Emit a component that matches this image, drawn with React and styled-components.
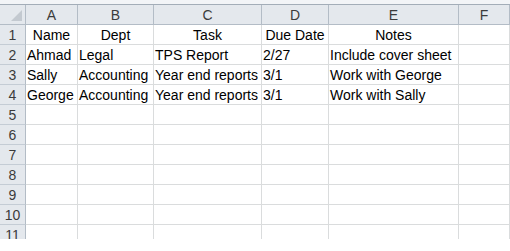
import React from "react";
import styled, { createGlobalStyle } from "styled-components";

const GlobalStyle = createGlobalStyle`
  html, body {
    margin: 0;
    padding: 0;
    background: #ffffff;
    overflow: hidden;
  }
`;

const COLS = "26px 52px 76px 108px 67px 130px 1fr";

const Sheet = styled.div`
  width: 510px;
  height: 239px;
  overflow: hidden;
  font-family: "Liberation Sans", Arial, sans-serif;
  font-size: 14px;
  color: #000;
`;

const TopStrip = styled.div`
  height: 4px;
  background: #f2f4f7;
  border-bottom: 1px solid #a3adb8;
`;

const Row = styled.div`
  display: grid;
  grid-template-columns: ${COLS};
  height: 20px;
`;

const HeadCell = styled.div`
  box-sizing: border-box;
  background: #e4e8ed;
  border-right: 1px solid #b3bcc6;
  border-bottom: 1px solid #b3bcc6;
  color: #3b3b3b;
  display: flex;
  align-items: center;
  justify-content: center;
  line-height: 1;
  padding-top: 1px;
`;

const Corner = styled(HeadCell)`
  position: relative;
  &::after {
    content: "";
    position: absolute;
    right: 3px;
    bottom: 3px;
    border-left: 11px solid transparent;
    border-bottom: 11px solid #c3c9d0;
  }
`;

const RowNum = styled(HeadCell)`
  border-bottom-color: #c4ccd5;
`;

const Cell = styled.div`
  box-sizing: border-box;
  border-right: 1px solid #dadcdd;
  border-bottom: 1px solid #dadcdd;
  display: flex;
  align-items: center;
  justify-content: ${(p) => (p.$center ? "center" : "flex-start")};
  padding: 1px 1px 0;
  white-space: nowrap;
  line-height: 1;
`;

const letters = ["A", "B", "C", "D", "E", "F"];

const data = [
  ["Name", "Dept", "Task", "Due Date", "Notes", ""],
  ["Ahmad", "Legal", "TPS Report", "2/27", "Include cover sheet", ""],
  ["Sally", "Accounting", "Year end reports", "3/1", "Work with George", ""],
  ["George", "Accounting", "Year end reports", "3/1", "Work with Sally", ""],
];

const App = () => {
  const rows = [];
  for (let i = 0; i < 11; i++) {
    rows.push(data[i] || ["", "", "", "", "", ""]);
  }

  return (
    <Sheet>
      <GlobalStyle />
      <TopStrip />
      <Row>
        <Corner />
        {letters.map((l) => (
          <HeadCell key={l}>{l}</HeadCell>
        ))}
      </Row>
      {rows.map((r, i) => (
        <Row key={i}>
          <RowNum>{i + 1}</RowNum>
          {r.map((v, j) => (
            <Cell key={j} $center={i === 0}>
              {v}
            </Cell>
          ))}
        </Row>
      ))}
    </Sheet>
  );
};

export default App;
